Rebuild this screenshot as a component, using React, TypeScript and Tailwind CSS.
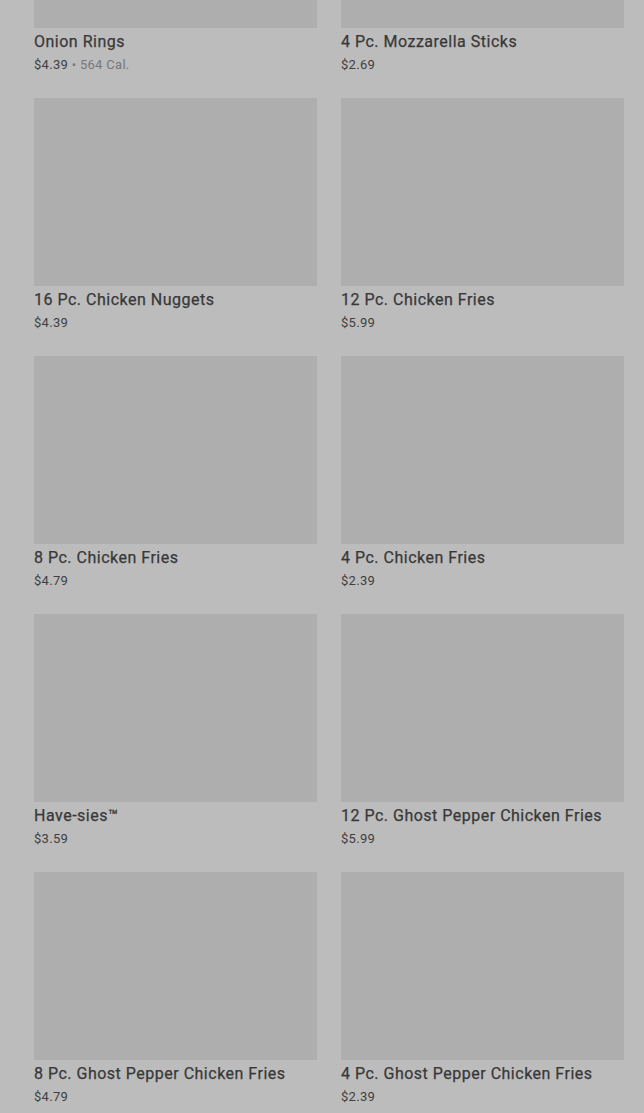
const items: { name: string; price: string; cal?: string }[] = [
  { name: 'Onion Rings', price: '$4.39', cal: '564 Cal.' },
  { name: '4 Pc. Mozzarella Sticks', price: '$2.69' },
  { name: '16 Pc. Chicken Nuggets', price: '$4.39' },
  { name: '12 Pc. Chicken Fries', price: '$5.99' },
  { name: '8 Pc. Chicken Fries', price: '$4.79' },
  { name: '4 Pc. Chicken Fries', price: '$2.39' },
  { name: 'Have-sies™', price: '$3.59' },
  { name: '12 Pc. Ghost Pepper Chicken Fries', price: '$5.99' },
  { name: '8 Pc. Ghost Pepper Chicken Fries', price: '$4.79' },
  { name: '4 Pc. Ghost Pepper Chicken Fries', price: '$2.39' },
]

export default function App() {
  return (
    <div className="h-[1113px] overflow-hidden bg-[#bcbcbc] font-['Roboto',sans-serif]">
      <div className="-mt-[160px] grid grid-cols-2 gap-x-6 pl-[34px] pr-5">
        {items.map((item) => (
          <div key={item.name} className="flex flex-col pb-[23px]">
            <div className="h-[188px] bg-[#aeaeae]" />
            <div className="pt-0.5 text-base leading-6 font-normal tracking-[0.5px] text-[#383838] [-webkit-text-stroke:0.25px_#383838]">
              {item.name}
            </div>
            <div className="pt-px text-[13px] leading-5 tracking-[0.3px] text-[#3f3f3f]">
              {item.price}
              {item.cal && <span className="text-[#787878]"> • {item.cal}</span>}
            </div>
          </div>
        ))}
      </div>
    </div>
  )
}
